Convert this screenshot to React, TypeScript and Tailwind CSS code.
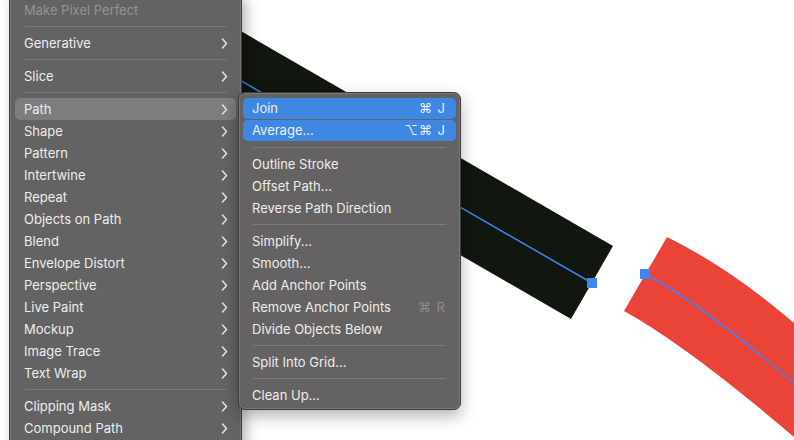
import React from "react";

type Item =
  | { kind: "item"; label: string; sub?: boolean; disabled?: boolean; active?: boolean; shortcut?: string; shortcutDisabled?: boolean }
  | { kind: "sep" };

const mainItems: Item[] = [
  { kind: "item", label: "Make Pixel Perfect", disabled: true },
  { kind: "sep" },
  { kind: "item", label: "Generative", sub: true },
  { kind: "sep" },
  { kind: "item", label: "Slice", sub: true },
  { kind: "sep" },
  { kind: "item", label: "Path", sub: true, active: true },
  { kind: "item", label: "Shape", sub: true },
  { kind: "item", label: "Pattern", sub: true },
  { kind: "item", label: "Intertwine", sub: true },
  { kind: "item", label: "Repeat", sub: true },
  { kind: "item", label: "Objects on Path", sub: true },
  { kind: "item", label: "Blend", sub: true },
  { kind: "item", label: "Envelope Distort", sub: true },
  { kind: "item", label: "Perspective", sub: true },
  { kind: "item", label: "Live Paint", sub: true },
  { kind: "item", label: "Mockup", sub: true },
  { kind: "item", label: "Image Trace", sub: true },
  { kind: "item", label: "Text Wrap", sub: true },
  { kind: "sep" },
  { kind: "item", label: "Clipping Mask", sub: true },
  { kind: "item", label: "Compound Path", sub: true },
];

const pathItems: Item[] = [
  { kind: "item", label: "Join", shortcut: "⌘ J", active: true },
  { kind: "item", label: "Average...", shortcut: "⌥⌘ J", active: true },
  { kind: "sep" },
  { kind: "item", label: "Outline Stroke" },
  { kind: "item", label: "Offset Path..." },
  { kind: "item", label: "Reverse Path Direction" },
  { kind: "sep" },
  { kind: "item", label: "Simplify..." },
  { kind: "item", label: "Smooth..." },
  { kind: "item", label: "Add Anchor Points" },
  { kind: "item", label: "Remove Anchor Points", shortcut: "⌘ R", shortcutDisabled: true },
  { kind: "item", label: "Divide Objects Below" },
  { kind: "sep" },
  { kind: "item", label: "Split Into Grid..." },
  { kind: "sep" },
  { kind: "item", label: "Clean Up..." },
];

function Chevron() {
  return (
    <svg width="7" height="11" viewBox="0 0 7 11" className="shrink-0">
      <path d="M1.5 1 L5.5 5.5 L1.5 10" fill="none" stroke="#e6e6e6" strokeWidth="1.5" strokeLinecap="round" strokeLinejoin="round" />
    </svg>
  );
}

function MenuRows({ items, blue }: { items: Item[]; blue?: boolean }) {
  return (
    <>
      {items.map((it, i) => {
        if (it.kind === "sep")
          return (
            <div key={i} className="h-[11px] flex items-center px-[10px]">
              <div className="h-px w-full bg-[#7b7a7a]" />
            </div>
          );
        let rowCls = "h-[22px]";
        if (it.active) rowCls = blue ? "h-[21px] mb-px bg-[#3e87e3]" : "h-[22px] bg-[#7e7d7d]";
        return (
          <div
            key={i}
            className={
              "flex items-center justify-between rounded-[5px] pl-[9px] " +
              (blue ? "pr-[10px] " : "pr-[8px] ") +
              rowCls
            }
          >
            <span className={it.disabled ? "text-[#939292]" : "text-[#ededed]"}>{it.label}</span>
            {it.sub && <Chevron />}
            {it.shortcut && (
              <span className={"tracking-[1px] " + (it.shortcutDisabled ? "text-[#8d8c8c]" : "text-[#ededed]")}>{it.shortcut}</span>
            )}
          </div>
        );
      })}
    </>
  );
}

function Artwork() {
  return (
    <svg className="absolute inset-0" width="794" height="440" viewBox="0 0 794 440">
      <rect width="794" height="440" fill="#ffffff" />
      <polygon points="0,-108 613,246 571,319 0,-11" fill="#11160f" />
      <line x1="0" y1="-58" x2="592" y2="283" stroke="#3d86f4" strokeWidth="1.5" />
      <rect x="587" y="278" width="10" height="10" fill="#3d86f4" />
      <path d="M624 311 L667 237 Q730 268 794 323 L794 437 Q686 345 624 311 Z" fill="#ea4439" />
      <path d="M645 274 Q695 299 794 383" fill="none" stroke="#3d86f4" strokeWidth="1.5" />
      <rect x="640" y="269" width="10" height="10" fill="#3d86f4" />
    </svg>
  );
}

export default function App() {
  return (
    <div
      className="relative w-[794px] h-[440px] overflow-hidden bg-white text-[13px] leading-none"
      style={{ fontFamily: "Inter, 'DejaVu Sans', sans-serif" }}
    >
      <Artwork />
      <div className="absolute left-[9px] top-[-1px] w-[233px] h-[480px] bg-[#646363] border border-[#3e3e3e] border-t-0 shadow-[inset_0_0_0_1px_rgba(255,255,255,0.12),4px_0_12px_rgba(0,0,0,0.3)] px-[5px]">
        <MenuRows items={mainItems} />
      </div>
      <div className="absolute left-[238px] top-[92px] w-[223px] h-[318px] rounded-[7px] bg-[#646262] border border-[#3c3c3c] shadow-[inset_0_0_0_1px_rgba(255,255,255,0.14),0_6px_16px_rgba(0,0,0,0.3)] px-[4px] pt-[5px] pb-[3px]">
        <MenuRows items={pathItems} blue />
      </div>
    </div>
  );
}
